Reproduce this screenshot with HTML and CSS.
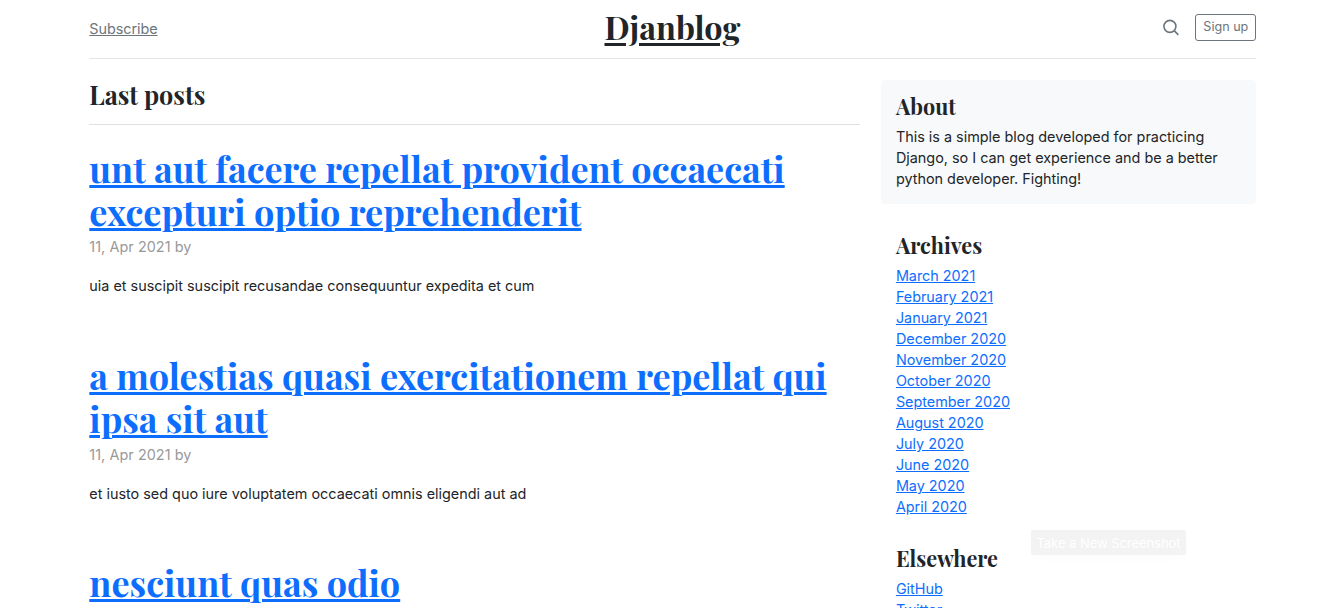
FILE: index.html
```html
<!DOCTYPE html>
<html lang="en">
<head>
<meta charset="utf-8">
<title>Djanblog</title>
<link rel="stylesheet" href="styles.css">
</head>
<body>
<div class="container">
  <header class="header">
    <div class="header-left"><a class="subscribe" href="#">Subscribe</a></div>
    <a class="logo" href="#">Djanblog</a>
    <div class="header-right">
      <a class="search" href="#" aria-label="Search">
        <svg width="20" height="20" viewBox="0 0 24 24" fill="none" stroke="currentColor" stroke-width="1.9" stroke-linejoin="round"><circle cx="10.7" cy="10" r="7.2"/><path d="M20.8 20.2l-5-5"/></svg>
      </a>
      <a class="signup" href="#">Sign up</a>
    </div>
  </header>
  <div class="row">
    <main class="main">
      <h3 class="section-title">Last posts</h3>
      <article class="post">
        <h2 class="post-title"><a href="#">unt aut facere repellat provident occaecati excepturi optio reprehenderit</a></h2>
        <p class="meta">11, Apr 2021 by</p>
        <p class="text">uia et suscipit suscipit recusandae consequuntur expedita et cum</p>
      </article>
      <article class="post">
        <h2 class="post-title"><a href="#">a molestias quasi exercitationem repellat qui ipsa sit aut</a></h2>
        <p class="meta">11, Apr 2021 by</p>
        <p class="text">et iusto sed quo iure voluptatem occaecati omnis eligendi aut ad</p>
      </article>
      <article class="post">
        <h2 class="post-title"><a href="#">nesciunt quas odio</a></h2>
      </article>
    </main>
    <aside class="aside">
      <section class="box about">
        <h4>About</h4>
        <p class="about-text">This is a simple blog developed for practicing Django, so I can get experience and be a better python developer. Fighting!</p>
      </section>
      <section class="box">
        <h4>Archives</h4>
        <ol class="links">
          <li><a href="#">March 2021</a></li>
          <li><a href="#">February 2021</a></li>
          <li><a href="#">January 2021</a></li>
          <li><a href="#">December 2020</a></li>
          <li><a href="#">November 2020</a></li>
          <li><a href="#">October 2020</a></li>
          <li><a href="#">September 2020</a></li>
          <li><a href="#">August 2020</a></li>
          <li><a href="#">July 2020</a></li>
          <li><a href="#">June 2020</a></li>
          <li><a href="#">May 2020</a></li>
          <li><a href="#">April 2020</a></li>
        </ol>
      </section>
      <section class="box">
        <h4>Elsewhere</h4>
        <ol class="links">
          <li><a href="#">GitHub</a></li>
          <li><a href="#">Twitter</a></li>
        </ol>
      </section>
    </aside>
  </div>
</div>
<div class="toast">Take a New Screenshot</div>
</body>
</html>
```
FILE: styles.css
```css
* { box-sizing: border-box; }
html { height: 100%; overflow: hidden; }
body {
  margin: 0;
  height: 608px;
  overflow: hidden;
  background: #fff;
  color: #212529;
  font: 14.4px/21px Inter, "Liberation Sans", sans-serif;
}
h2, h3, h4, p, ol { margin: 0; padding: 0; }
h2, h3, h4, .logo {
  font-family: "Playfair Display", "Liberation Serif", serif;
  font-weight: 700;
}
a { color: #0d6efd; text-decoration: underline; }

.container { width: 1167px; margin: 0 0 0 89.3px; }
.header {
  display: grid;
  grid-template-columns: 1fr auto 1fr;
  align-items: center;
  height: 59px;
  padding-bottom: 3px;
  border-bottom: 1px solid #e5e5e5;
}
.header-left { padding-top: 2px; }
.subscribe { color: #6c757d; letter-spacing: -0.05px; }
.logo {
  color: #212529;
  font-size: 32.4px;
  line-height: 43px;
  padding-bottom: 2px;
  margin-left: -0.6px;
  text-decoration-thickness: 3px;
  text-underline-offset: 3px;
}
.header-right { display: flex; justify-content: flex-end; align-items: center; gap: 14px; }
.search { display: flex; color: #6c757d; }
.signup {
  height: 27px;
  width: 61px;
  border: 1px solid #6c757d;
  border-radius: 3px;
  color: #6c757d;
  font-size: 12.6px;
  line-height: 24px;
  text-align: center;
  text-decoration: none;
}

.row { display: flex; gap: 21px; padding-top: 21px; }
.main { width: 771px; }
.section-title {
  height: 45px;
  border-bottom: 1px solid #dee2e6;
  font-size: 25.2px;
  line-height: 30px;
  margin-bottom: 22px;
}
.post { margin-bottom: 57.8px; }
.post-title { font-size: 36px; line-height: 43px; margin-bottom: 3.4px; }
.post:last-child { margin-bottom: 0; }
.post-title a { text-decoration-thickness: 3px; text-underline-offset: 2px; }
.meta { color: #999; margin-bottom: 18px; letter-spacing: 0.06px; }

.aside { width: 375px; }
.box { padding: 14px 15px 15px 14.6px; }
.about { background: #f8f9fa; border-radius: 4px; margin-bottom: 15px; }
h4 { font-size: 21.6px; line-height: 25px; margin-bottom: 7px; }
.links { list-style: none; letter-spacing: -0.02px; }

.toast {
  position: absolute;
  left: 1031px;
  top: 530px;
  width: 155px;
  height: 25px;
  border-radius: 2px;
  background: #f3f3f3;
  box-shadow: 0 4px 12px rgba(0, 0, 0, 0.012);
  color: #fff;
  font-size: 13px;
  line-height: 26px;
  letter-spacing: -0.05px;
  text-align: center;
}
```
